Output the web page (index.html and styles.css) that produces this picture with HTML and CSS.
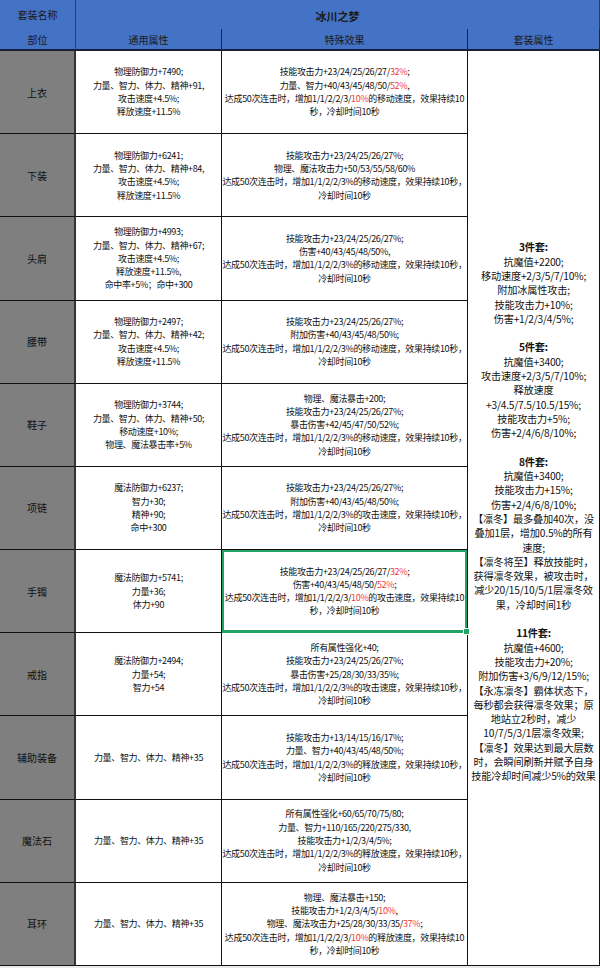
FILE: index.html
```html
<!DOCTYPE html>
<html lang="zh-CN">
<head>
<meta charset="utf-8">
<link rel="stylesheet" href="styles.css">
</head>
<body>
<div class="sheet">
  <div class="h1 part-h"><p>套装名称</p></div>
  <div class="h1 title"><p>冰川之梦</p></div>
  <div class="h2 part-h"><p>部位</p></div>
  <div class="h2"><p>通用属性</p></div>
  <div class="h2"><p>特殊效果</p></div>
  <div class="h2 last"><p>套装属性</p></div>

  <div class="part"><p>上衣</p></div>
  <div class="cell"><p>物理防御力+7490;<br>力量、智力、体力、精神+91,<br>攻击速度+4.5%;<br>释放速度+11.5%</p></div>
  <div class="cell"><p>技能攻击力+23/24/25/26/27/<span class="red">32%</span>;<br>力量、智力+40/43/45/48/50/<span class="red">52%</span>,<br>达成50次连击时，增加1/1/2/2/3/<span class="red">10%</span>的移动速度，效果持续10<br>秒，冷却时间10秒</p></div>

  <div class="set"><p>
    <b>3件套:</b><br>抗魔值+2200;<br>移动速度+2/3/5/7/10%;<br>附加冰属性攻击;<br>技能攻击力+10%;<br>伤害+1/2/3/4/5%;<br><br>
    <b>5件套:</b><br>抗魔值+3400;<br>攻击速度+2/3/5/7/10%;<br>释放速度<br>+3/4.5/7.5/10.5/15%;<br>技能攻击力+5%;<br>伤害+2/4/6/8/10%;<br><br>
    <b>8件套:</b><br>抗魔值+3400;<br>技能攻击力+15%;<br>伤害+2/4/6/8/10%;<br>【凛冬】最多叠加40次，没<br>叠加1层，增加0.5%的所有<br>速度;<br>【凛冬将至】释放技能时，<br>获得凛冬效果，被攻击时，<br>减少20/15/10/5/1层凛冬效<br>果，冷却时间1秒<br><br>
    <b>11件套:</b><br>抗魔值+4600;<br>技能攻击力+20%;<br>附加伤害+3/6/9/12/15%;<br>【永冻凛冬】霸体状态下，<br>每秒都会获得凛冬效果；原<br>地站立2秒时，减少<br>10/7/5/3/1层凛冬效果;<br>【凛冬】效果达到最大层数<br>时，会瞬间刷新并赋予自身<br>技能冷却时间减少5%的效果
  </p></div>

  <div class="part"><p>下装</p></div>
  <div class="cell"><p>物理防御力+6241;<br>力量、智力、体力、精神+84,<br>攻击速度+4.5%;<br>释放速度+11.5%</p></div>
  <div class="cell"><p>技能攻击力+23/24/25/26/27%;<br>物理、魔法攻击力+50/53/55/58/60%<br>达成50次连击时，增加1/1/2/2/3%的移动速度，效果持续10秒，<br>冷却时间10秒</p></div>

  <div class="part"><p>头肩</p></div>
  <div class="cell"><p>物理防御力+4993;<br>力量、智力、体力、精神+67;<br>攻击速度+4.5%;<br>释放速度+11.5%,<br>命中率+5%；命中+300</p></div>
  <div class="cell"><p>技能攻击力+23/24/25/26/27%;<br>伤害+40/43/45/48/50%,<br>达成50次连击时，增加1/1/2/2/3%的移动速度，效果持续10秒，<br>冷却时间10秒</p></div>

  <div class="part"><p>腰带</p></div>
  <div class="cell"><p>物理防御力+2497;<br>力量、智力、体力、精神+42;<br>攻击速度+4.5%;<br>释放速度+11.5%</p></div>
  <div class="cell"><p>技能攻击力+23/24/25/26/27%;<br>附加伤害+40/43/45/48/50%;<br>达成50次连击时，增加1/1/2/2/3%的移动速度，效果持续10秒，<br>冷却时间10秒</p></div>

  <div class="part"><p>鞋子</p></div>
  <div class="cell"><p>物理防御力+3744;<br>力量、智力、体力、精神+50;<br>移动速度+10%;<br>物理、魔法暴击率+5%</p></div>
  <div class="cell"><p>物理、魔法暴击+200;<br>技能攻击力+23/24/25/26/27%;<br>暴击伤害+42/45/47/50/52%;<br>达成50次连击时，增加1/1/2/2/3%的移动速度，效果持续10秒，<br>冷却时间10秒</p></div>

  <div class="part"><p>项链</p></div>
  <div class="cell"><p>魔法防御力+6237;<br>智力+30;<br>精神+90;<br>命中+300</p></div>
  <div class="cell"><p>技能攻击力+23/24/25/26/27%;<br>附加伤害+40/43/45/48/50%;<br>达成50次连击时，增加1/1/2/2/3%的攻击速度，效果持续10秒，<br>冷却时间10秒</p></div>

  <div class="part"><p>手镯</p></div>
  <div class="cell"><p>魔法防御力+5741;<br>力量+36;<br>体力+90</p></div>
  <div class="cell selected"><p>技能攻击力+23/24/25/26/27/<span class="red">32%</span>;<br>伤害+40/43/45/48/50/<span class="red">52%</span>;<br>达成50次连击时，增加1/1/2/2/3/<span class="red">10%</span>的攻击速度，效果持续10<br>秒，冷却时间10秒</p><span class="handle"></span></div>

  <div class="part"><p>戒指</p></div>
  <div class="cell"><p>魔法防御力+2494;<br>力量+54;<br>智力+54</p></div>
  <div class="cell"><p>所有属性强化+40;<br>技能攻击力+23/24/25/26/27%;<br>暴击伤害+25/28/30/33/35%;<br>达成50次连击时，增加1/1/2/2/3%的攻击速度，效果持续10秒，<br>冷却时间10秒</p></div>

  <div class="part"><p>辅助装备</p></div>
  <div class="cell"><p>力量、智力、体力、精神+35</p></div>
  <div class="cell"><p>技能攻击力+13/14/15/16/17%;<br>力量、智力+40/43/45/48/50%;<br>达成50次连击时，增加1/1/2/2/3%的释放速度，效果持续10秒，<br>冷却时间10秒</p></div>

  <div class="part"><p>魔法石</p></div>
  <div class="cell"><p>力量、智力、体力、精神+35</p></div>
  <div class="cell"><p>所有属性强化+60/65/70/75/80;<br>力量、智力+110/165/220/275/330,<br>技能攻击力+1/2/3/4/5%;<br>达成50次连击时，增加1/1/2/2/3%的释放速度，效果持续10秒，<br>冷却时间10秒</p></div>

  <div class="part"><p>耳环</p></div>
  <div class="cell"><p>力量、智力、体力、精神+35</p></div>
  <div class="cell"><p>物理、魔法暴击+150;<br>技能攻击力+1/2/3/4/5/<span class="red">10%</span>,<br>物理、魔法攻击力+25/28/30/33/35/<span class="red">37%</span>;<br>达成50次连击时，增加1/1/2/2/3/<span class="red">10%</span>的释放速度，效果持续10<br>秒，冷却时间10秒</p></div>
</div>
</body>
</html>
```

FILE: styles.css
```css
html, body {
  margin: 0;
  padding: 0;
  background: #e9e9e9;
}

.sheet {
  width: 600px;
  height: 966px;
  display: grid;
  grid-template-columns: 76px 146px 246px 132px;
  grid-template-rows: 29px 22px repeat(11, 1fr);
  font-family: "Noto Sans CJK SC", "Noto Sans", sans-serif;
  color: #111;
  background: #fff;
}

.sheet > div {
  box-sizing: border-box;
  display: flex;
  align-items: center;
  justify-content: center;
  text-align: center;
  white-space: nowrap;
  min-width: 0;
}

.sheet p {
  margin: 0;
}

.h1, .h2 {
  background: #4472c4;
  font-size: 10px;
  color: #1a1a1a;
}

.h1 {
  border-right: 1px solid #2b3f66;
}

.title {
  grid-column: 2 / 5;
  font-weight: bold;
  font-size: 11px;
  padding-top: 2px;
}

.h2 {
  border-right: 1px solid #1c2640;
  border-bottom: 2px solid #17203a;
}

.part-h {
  border-right: 1px solid #2b3f66;
}

.part {
  grid-column: 1;
  background: #7f7f7f;
  font-size: 10px;
  color: #111;
  border-bottom: 1px solid #111;
  border-right: 2px solid #333;
}

.cell {
  font-size: 9px;
  line-height: 13.3px;
  letter-spacing: -0.35px;
  border-right: 1px solid #111;
  border-bottom: 1px solid #111;
}

.set {
  grid-column: 4;
  grid-row: 3 / 14;
  font-size: 10.2px;
  line-height: 14.3px;
  letter-spacing: -0.2px;
  padding-top: 8px;
  border-right: 1px solid #111;
  border-bottom: 1px solid #111;
}

.set b {
  font-weight: bold;
}

.red {
  color: #f03a3a;
}

.selected {
  position: relative;
  box-shadow: inset 0 0 0 2px #21a366;
  border-bottom: 1px solid #21a366;
}

.handle {
  position: absolute;
  right: -3px;
  bottom: -3px;
  width: 5px;
  height: 5px;
  background: #21a366;
  border: 1px solid #fff;
}
```
